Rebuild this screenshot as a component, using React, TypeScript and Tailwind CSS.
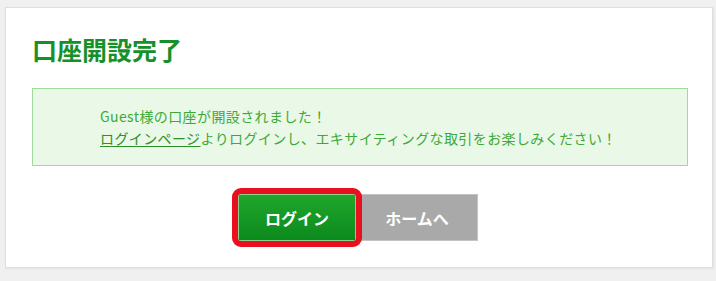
const jp = "font-['Meiryo','Noto_Sans_CJK_JP',sans-serif]";

export default function App() {
  return (
    <div className={`min-h-[281px] w-[716px] bg-[#f0f0f0] pt-[7px] pl-[5px] ${jp}`}>
      <div className="h-[261px] w-[708px] border border-[#dedede] bg-white px-[26px] pt-[24px] shadow-[1px_1px_2px_rgba(0,0,0,0.06)]">
        <h1 className="text-[25px] leading-[34px] font-bold text-[#16912a]">
          口座開設完了
        </h1>
        <div className="mt-[22px] w-[656px] border border-[#9fdc9c] bg-[#eaf8e7] py-[16px] pl-[67px] text-[14px] leading-[22px] tracking-[0.4px] text-[#3caa36]">
          <p>Guest様の口座が開設されました！</p>
          <p>
            <a href="#" className="text-[#2e8f2a] underline underline-offset-2">
              ログインページ
            </a>
            よりログインし、エキサイティングな取引をお楽しみください！
          </p>
        </div>
        <div className="mt-[28px] flex justify-center pr-[2px]">
          <div className="relative">
            <button className="flex h-[47px] w-[118px] items-center justify-center border border-[#8fd08f] bg-gradient-to-b from-[#1fa62b] to-[#0c8a1d] text-[16px] font-bold text-white">
              ログイン
            </button>
            <span className="pointer-events-none absolute -inset-[6px] rounded-[9px] border-[6px] border-[#e8101e]" />
          </div>
          <button className="flex h-[47px] w-[122px] items-center justify-center border border-[#c4c4c4] bg-[#a9a9a9] text-[16px] font-bold text-white">
            ホームへ
          </button>
        </div>
      </div>
    </div>
  );
}
